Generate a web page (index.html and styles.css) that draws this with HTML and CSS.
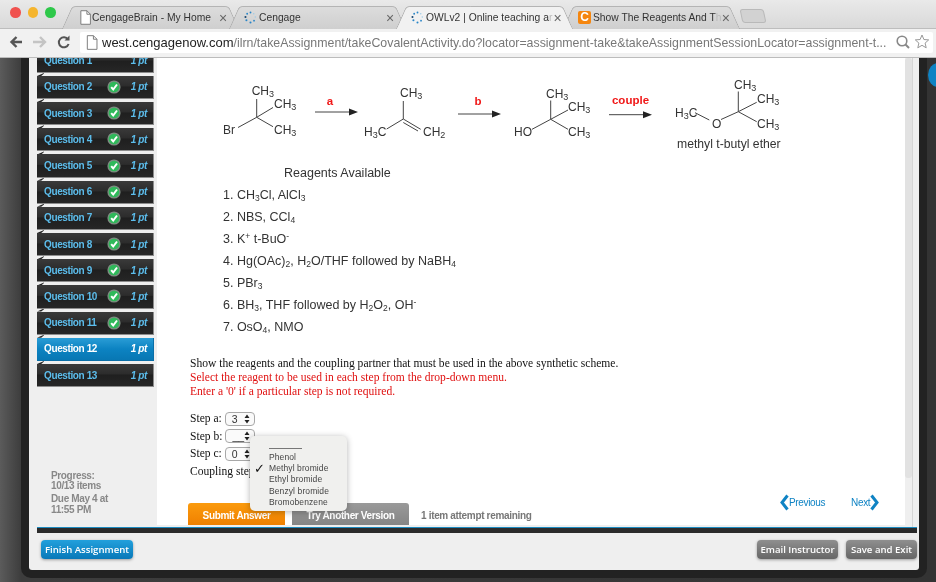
FILE: index.html
```html
<!DOCTYPE html>
<html lang="en">
<head>
<meta charset="utf-8">
<title>Show The Reagents And The Coupling Partner</title>
<link rel="stylesheet" href="styles.css">
</head>
<body>
<svg class="defs" width="0" height="0" aria-hidden="true">
  <symbol id="ck" viewBox="0 0 14 14">
    <circle cx="7" cy="7" r="6.6" fill="#7d8a80"/>
    <circle cx="7" cy="7" r="5.3" fill="#2fb95a"/>
    <path d="M4.2 7.2l2 2.3 3.8-5" fill="none" stroke="#fff" stroke-width="2"/>
  </symbol>
  <symbol id="spin" viewBox="0 0 14 14">
    <g fill="#2a86c8">
      <circle cx="7" cy="1.6" r="1"/><circle cx="10.5" cy="3" r=".8" fill="#9ccbe8"/><circle cx="12.2" cy="6.4" r=".8" fill="#9ccbe8"/>
      <circle cx="10.8" cy="10.4" r="1"/><circle cx="7" cy="12.4" r="1.1"/><circle cx="2.6" cy="10" r="1.1"/>
      <circle cx="1.6" cy="6.4" r="1.1" fill="#16456e"/><circle cx="3.4" cy="3" r="1"/>
    </g>
  </symbol>
  <symbol id="doc" viewBox="0 0 14 16">
    <path d="M2 .7h6.5L12.3 4.500V15.300H2z" fill="#fff" stroke="#777"/>
    <path d="M8.500 .7V4.500h3.800" fill="none" stroke="#777"/>
  </symbol>
  <symbol id="sel" viewBox="0 0 6 10">
    <path d="M3 .5L5.500 4H.5zM3 9.500L.5 6h5z" fill="#222"/>
  </symbol>
</svg>

<header class="chrome">
  <div class="tabstrip">
    <div class="lights"><i class="light red"></i><i class="light amber"></i><i class="light green"></i></div>
    <div class="tab t1"><svg class="fav"><use href="#doc"/></svg><span class="tab-label">CengageBrain - My Home</span><span class="tab-x">×</span></div>
    <div class="tab"><svg class="fav"><use href="#spin"/></svg><span class="tab-label">Cengage</span><span class="tab-x">×</span></div>
    <div class="tab active"><svg class="fav"><use href="#spin"/></svg><span class="tab-label">OWLv2 | Online teaching a<em>r</em></span><span class="tab-x">×</span></div>
    <div class="tab"><span class="c-icon">C</span><span class="tab-label">Show The Reagents And T<em>h</em></span><span class="tab-x">×</span></div>
    <div class="newtab"></div>
  </div>
  <div class="toolbar">
    <svg class="nav-icons" width="70" height="20" viewBox="0 0 70 20">
      <path d="M22 10H12M16.500 5l-5 5 5 5" fill="none" stroke="#555" stroke-width="2.400"/>
      <path d="M33 10h11M40 5l5 5-5 5" fill="none" stroke="#c4c4c4" stroke-width="2.400"/>
      <path d="M68 7.500a5 5 0 1 0 .6 4.500" fill="none" stroke="#555" stroke-width="2"/>
      <path d="M69.500 3.500v5h-5z" fill="#555"/>
    </svg>
    <div class="omnibox">
      <svg class="omni-doc"><use href="#doc"/></svg>
      <span class="url"><b>west.cengagenow.com</b>/ilrn/takeAssignment/takeCovalentActivity.do?locator=assignment-take&amp;takeAssignmentSessionLocator=assignment-t...</span>
      <svg class="omni-icons" width="38" height="18" viewBox="0 0 38 18">
        <circle cx="7" cy="8" r="4.800" fill="none" stroke="#888" stroke-width="1.600"/>
        <path d="M10.500 11.500l3.500 3.500" stroke="#888" stroke-width="2"/>
        <path d="M27 2l1.900 4.500 4.800.4-3.600 3.200 1.100 4.700-4.200-2.500-4.200 2.500 1.100-4.700-3.600-3.200 4.800-.4z" fill="#fff" stroke="#999"/>
      </svg>
    </div>
  </div>
</header>

<div class="stage">
  <div class="modal">
    <div class="panel">
      <div class="work">
        <aside class="sidebar">
          <ol class="questions">
            <li class="q"><span class="q-name">Question 1</span><span class="q-pt">1 pt</span></li>
            <li class="q"><span class="q-name">Question 2</span><svg class="ok"><use href="#ck"/></svg><span class="q-pt">1 pt</span></li>
            <li class="q"><span class="q-name">Question 3</span><svg class="ok"><use href="#ck"/></svg><span class="q-pt">1 pt</span></li>
            <li class="q"><span class="q-name">Question 4</span><svg class="ok"><use href="#ck"/></svg><span class="q-pt">1 pt</span></li>
            <li class="q"><span class="q-name">Question 5</span><svg class="ok"><use href="#ck"/></svg><span class="q-pt">1 pt</span></li>
            <li class="q"><span class="q-name">Question 6</span><svg class="ok"><use href="#ck"/></svg><span class="q-pt">1 pt</span></li>
            <li class="q"><span class="q-name">Question 7</span><svg class="ok"><use href="#ck"/></svg><span class="q-pt">1 pt</span></li>
            <li class="q"><span class="q-name">Question 8</span><svg class="ok"><use href="#ck"/></svg><span class="q-pt">1 pt</span></li>
            <li class="q"><span class="q-name">Question 9</span><svg class="ok"><use href="#ck"/></svg><span class="q-pt">1 pt</span></li>
            <li class="q"><span class="q-name">Question 10</span><svg class="ok"><use href="#ck"/></svg><span class="q-pt">1 pt</span></li>
            <li class="q"><span class="q-name">Question 11</span><svg class="ok"><use href="#ck"/></svg><span class="q-pt">1 pt</span></li>
            <li class="q current"><span class="q-name">Question 12</span><span class="q-pt">1 pt</span></li>
            <li class="q"><span class="q-name">Question 13</span><span class="q-pt">1 pt</span></li>
          </ol>
          <div class="progress">
            <p>Progress:<br>10/13 items</p>
            <p>Due May 4 at<br>11:55 PM</p>
          </div>
        </aside>

        <main class="content">
          <svg class="scheme" width="748" height="102" viewBox="157 58 748 102" role="img" aria-label="Synthetic scheme">
            <g class="bonds">
              <path d="M256.700 117.300V99M256.700 117.300L273 107.500M256.700 117.300L273 126.700M256.700 117.300L238 127.500"/>
              <path d="M403.300 101V119M403.300 119L386.700 129M403.300 119L420.700 129.300M403.300 122.500L418 131"/>
              <path d="M550.700 119.300V100.500M550.700 119.300L568 110M550.700 119.300L568 129.300M550.700 119.300L532 129.300"/>
              <path d="M738.300 111.700V91.500M738.300 111.700L756.700 102.300M738.300 111.700L756.700 121.700M738.300 111.700L721 119.500M709.300 120L695 112.700"/>
              <path d="M315 112H350M458 114H493M609 114.700H644"/>
            </g>
            <path class="head" d="M358 112l-9-3.500v7zM501 114l-9-3.500v7zM652 114.700l-9-3.500v7z"/>
            <g class="atoms">
              <text x="251.700" y="95">CH<tspan class="sb" dy="2">3</tspan></text>
              <text x="274" y="108">CH<tspan class="sb" dy="2">3</tspan></text>
              <text x="274" y="133.500">CH<tspan class="sb" dy="2">3</tspan></text>
              <text x="223" y="133.500">Br</text>
              <text x="400" y="97">CH<tspan class="sb" dy="2">3</tspan></text>
              <text x="364" y="136">H<tspan class="sb" dy="2">3</tspan><tspan dy="-2">C</tspan></text>
              <text x="423" y="136">CH<tspan class="sb" dy="2">2</tspan></text>
              <text x="546" y="98">CH<tspan class="sb" dy="2">3</tspan></text>
              <text x="568" y="110.500">CH<tspan class="sb" dy="2">3</tspan></text>
              <text x="568" y="136">CH<tspan class="sb" dy="2">3</tspan></text>
              <text x="514" y="136">HO</text>
              <text x="734" y="88.500">CH<tspan class="sb" dy="2">3</tspan></text>
              <text x="757" y="103">CH<tspan class="sb" dy="2">3</tspan></text>
              <text x="757" y="127.500">CH<tspan class="sb" dy="2">3</tspan></text>
              <text x="712" y="127.500">O</text>
              <text x="675" y="116.500">H<tspan class="sb" dy="2">3</tspan><tspan dy="-2">C</tspan></text>
              <text class="name" x="677" y="147.500">methyl t-butyl ether</text>
            </g>
            <g class="steps-red">
              <text x="330" y="105" text-anchor="middle">a</text>
              <text x="478" y="105" text-anchor="middle">b</text>
              <text x="630.500" y="104" text-anchor="middle">couple</text>
            </g>
          </svg>

          <section class="reagents">
            <h2 class="reagents-title">Reagents Available</h2>
            <ol class="reagent-list">
              <li>1. CH<sub>3</sub>Cl, AlCl<sub>3</sub></li>
              <li>2. NBS, CCl<sub>4</sub></li>
              <li>3. K<sup>+</sup> t-BuO<sup>-</sup></li>
              <li>4. Hg(OAc)<sub>2</sub>, H<sub>2</sub>O/THF followed by NaBH<sub>4</sub></li>
              <li>5. PBr<sub>3</sub></li>
              <li>6. BH<sub>3</sub>, THF followed by H<sub>2</sub>O<sub>2</sub>, OH<sup>-</sup></li>
              <li>7. OsO<sub>4</sub>, NMO</li>
            </ol>
          </section>

          <section class="prompt">
            <p>Show the reagents and the coupling partner that must be used in the above synthetic scheme.</p>
            <p class="warn">Select the reagent to be used in each step from the drop-down menu.</p>
            <p class="warn">Enter a '0' if a particular step is not required.</p>
          </section>

          <section class="steps">
            <div class="step">Step a: <span class="select"><span>3</span><svg class="updown"><use href="#sel"/></svg></span></div>
            <div class="step">Step b: <span class="select"><span>__</span><svg class="updown"><use href="#sel"/></svg></span></div>
            <div class="step">Step c: <span class="select"><span>0</span><svg class="updown"><use href="#sel"/></svg></span></div>
            <div class="step">Coupling step:</div>
            <div class="menu">
              <div class="menu-blank"></div>
              <div class="menu-item">Phenol</div>
              <div class="menu-item checked">Methyl bromide</div>
              <div class="menu-item">Ethyl bromide</div>
              <div class="menu-item">Benzyl bromide</div>
              <div class="menu-item">Bromobenzene</div>
            </div>
          </section>

          <div class="actions">
            <button class="btn submit">Submit Answer</button>
            <button class="btn another">Try Another Version</button>
            <span class="remaining">1 item attempt remaining</span>
            <nav class="pager">
              <a class="prev"><svg width="9" height="17" viewBox="0 0 9 17"><path d="M7.500 1.500L2 8.500l5.500 7" fill="none" stroke="#0f83c4" stroke-width="3"/></svg>Previous</a>
              <a class="next">Next<svg width="9" height="17" viewBox="0 0 9 17"><path d="M1.500 1.500L7 8.500l-5.500 7" fill="none" stroke="#0f83c4" stroke-width="3"/></svg></a>
            </nav>
          </div>
        </main>
        <div class="scroll"><div class="thumb"></div></div>
      </div>
      <div class="rule"></div>
      <footer class="foot">
        <button class="fbtn finish">Finish Assignment</button>
        <div class="foot-right">
          <button class="fbtn grey email">Email Instructor</button>
          <button class="fbtn grey save">Save and Exit</button>
        </div>
      </footer>
    </div>
  </div>
  <div class="close-dot"></div>
</div>
</body>
</html>
```
FILE: styles.css
```css
* { box-sizing: border-box; }
html, body { margin: 0; height: 100%; }
body {
  width: 936px;
  height: 582px;
  overflow: hidden;
  font-family: "Liberation Sans", Arial, sans-serif;
  background: #333;
  filter: blur(0.35px);
}
.defs { position: absolute; }
p, h2, ol { margin: 0; padding: 0; }
ol { list-style: none; }
button { border: 0; padding: 0; font: inherit; }

/* Browser chrome */
.chrome { height: 58px; display: flex; flex-direction: column; background: #f1f1f1; }
.tabstrip {
  height: 29px;
  display: flex;
  align-items: flex-end;
  background: linear-gradient(#e9e9e9, #d9d9d9);
  padding-left: 67px;
  border-bottom: 1px solid #bdbdbd;
  position: relative;
}
.lights { position: absolute; left: 10px; top: 7px; display: flex; gap: 7px; }
.light { width: 10.500px; height: 10.500px; border-radius: 50%; }
.red { background: #f0524f; }
.amber { background: #f5b52e; }
.green { background: #2ec84a; }

.tab {
  position: relative;
  z-index: 1;
  width: 167px;
  height: 23px;
  margin-bottom: -1px;
  padding-left: 10px;
  display: flex;
  align-items: center;
  font-size: 10.300px;
  color: #333;
  isolation: isolate;
  flex: none;
}
.tab::before, .tab::after {
  content: "";
  position: absolute;
  top: 0; bottom: 0;
  width: 55%;
  background: linear-gradient(#dcdcdc, #cfcfcf);
  border-top: 1px solid #b4b4b4;
  z-index: -1;
}
.tab::before { left: 0; transform: skewX(-24deg); border-left: 1px solid #aaa; border-radius: 4px 0 0 0; }
.tab::after { right: 0; transform: skewX(24deg); border-right: 1px solid #aaa; border-radius: 0 4px 0 0; }
.tab.active { z-index: 2; }
.tab.active::before, .tab.active::after { background: #f1f1f1; }
.t1 { padding-left: 12px; }
.tab-label { flex: 1; white-space: nowrap; margin-left: 2px; }
.t1 .tab-label { margin-left: 0; }
.tab-label em { font-style: normal; color: #bbb; }
.tab-x { width: 12px; margin-right: 5px; font-size: 14px; line-height: 1; color: #666; text-align: center; }
.fav { width: 13px; height: 15px; flex: none; }
.c-icon {
  width: 13px; height: 13px; flex: none;
  background: #f5860f; color: #fff; border-radius: 2px;
  font: bold 12px/13px "Liberation Sans", sans-serif; text-align: center;
}
.newtab {
  width: 24px; height: 14px; margin: 0 0 5px 6px;
  background: #d2d2d2; border: 1px solid #b9b9b9; border-radius: 3px;
  transform: skewX(12deg);
}
.toolbar {
  flex: 1;
  display: flex;
  align-items: center;
  padding: 0 3px 2px 0;
  background: #f1f1f1;
  border-bottom: 1px solid #bcbcbc;
}
.nav-icons { flex: none; margin-right: 10px; }
.omnibox {
  flex: 1;
  height: 21px;
  display: flex;
  align-items: center;
  background: #fff;
  border-radius: 2px;
  padding-left: 5px;
  color: #777;
  white-space: nowrap;
  overflow: hidden;
}
.omni-doc { width: 14px; height: 15px; flex: none; margin-right: 3px; }
.url { flex: 1; font-size: 12.350px; }
.url b { font-size: 13px; font-weight: normal; color: #222; }
.omni-icons { flex: none; }

/* Stage */
.stage {
  height: 524px;
  position: relative;
  background: linear-gradient(90deg, #5b5b5b, #3d3d3d 21px, #333 100%);
  overflow: hidden;
}
.modal {
  margin-left: 21px;
  width: 906px;
  height: 520px;
  padding: 0 8px 8px;
  background: #222;
  border-radius: 0 0 10px 10px;
}
.panel {
  height: 100%;
  background: #efefef;
  border-radius: 0 0 3px 3px;
  padding: 0 2px 0 8px;
  display: flex;
  flex-direction: column;
}
.work { height: 469px; display: flex; overflow: hidden; }

/* Sidebar */
.sidebar { width: 117px; flex: none; display: flex; flex-direction: column; justify-content: space-between; }
.questions { margin-top: -8.300px; }
.q {
  position: relative;
  height: 23.200px;
  margin-bottom: 3px;
  display: flex;
  align-items: center;
  padding: 0 6px 0 7px;
  background: linear-gradient(#3a3a3a, #2c2c2c 45%, #1f1f1f 50%, #262626);
  border: 1px solid #8c8c8c;
  border-width: 0 1px 1px 0;
  font-size: 10px;
  letter-spacing: -0.38px;
  font-weight: bold;
  color: #5cbdec;
}
.q::before {
  content: "";
  position: absolute;
  left: 0; top: -3px;
  width: 7px; height: 3px;
  background: #222;
  clip-path: polygon(0 100%, 100% 0, 100% 20%, 60% 100%);
}
.q.current { background: linear-gradient(#2a9dd6, #0c83c2 50%, #0877b3); border-color: #0a6fa8; color: #fff; }
.q-name { flex: 1; }
.q-pt { font-style: italic; width: 18px; text-align: right; }
.ok { width: 14px; height: 14px; margin-right: 8px; }
.progress {
  padding: 0 0 12px 14px;
  font-size: 10px;
  letter-spacing: -0.35px;
  font-weight: bold;
  line-height: 10.300px;
  color: #888;
}
.progress p + p { margin-top: 3px; }

/* Content */
.content { width: 748px; margin-left: 3px; height: 467px; background: #fff; flex: none; display: flex; flex-direction: column; }
.scheme { display: block; flex: none; }
.bonds path { fill: none; stroke: #444; stroke-width: 1; }
.head { fill: #222; }
.atoms text { font-size: 12px; fill: #333; }
.atoms .name { font-size: 12.200px; }
.atoms .sb { font-size: 9px; }
.atoms text tspan.sb + tspan { font-size: 12px; }
.steps-red text { font-size: 11.500px; font-weight: bold; fill: #f01818; }

.reagents { height: 185px; font-size: 12.500px; color: #333; }
.reagents-title { font-size: 12.500px; font-weight: normal; padding: 6px 0 0 127px; line-height: 15px; }
.reagent-list { padding: 3px 0 0 66px; }
.reagent-list li { height: 22px; line-height: 22px; white-space: nowrap; }
sub, sup { font-size: 8.500px; line-height: 0; }
sub { vertical-align: -2px; }
sup { vertical-align: 4px; }

.prompt { padding: 12px 0 0 33px; font: 11.570px/14px "Liberation Serif", "Times New Roman", serif; color: #111; }
.warn { color: #e01010; }

.steps { position: relative; margin-top: 11px; padding-left: 33px; font: 11.570px/17.500px "Liberation Serif", "Times New Roman", serif; color: #111; }
.step { white-space: nowrap; height: 17.500px; display: flex; align-items: center; gap: 3px; }
.select {
  width: 30px; height: 14px;
  display: flex; align-items: center; justify-content: space-between;
  padding: 0 4px 0 6px;
  border: 1px solid #a8a8a8; border-radius: 4px;
  font: 10.500px/1 "Liberation Sans", sans-serif;
  color: #333; background: #fafafa;
}
.updown { width: 6px; height: 10px; }
.menu {
  position: absolute;
  z-index: 5;
  left: 93px; top: 26px;
  width: 97px; height: 75px;
  padding: 3px 0 0 19px;
  background: #f0f0ee;
  border-radius: 5px;
  box-shadow: 0 1px 6px rgba(0,0,0,.3);
  font: 8.500px/11.200px "Liberation Sans", sans-serif;
  letter-spacing: 0.1px;
  color: #444;
  white-space: nowrap;
}
.menu-blank { height: 10px; width: 33px; border-bottom: 1px solid #777; margin-bottom: 3px; }
.menu-item { position: relative; height: 11.200px; }
.checked::before { content: "✓"; position: absolute; left: -15px; top: 0; font-size: 13px; font-weight: bold; color: #111; font-family: "DejaVu Sans", sans-serif; }

.actions { margin-top: auto; padding-left: 31px; display: flex; align-items: flex-end; position: relative; }
.btn { height: 22px; padding-top: 3px; color: #fff; font-weight: bold; font-size: 10px; letter-spacing: -0.35px; border-radius: 3px 3px 0 0; flex: none; font-family: inherit; }
.submit { width: 97px; background: linear-gradient(#fb9b0e, #f08000); }
.another { width: 117px; margin-left: 7px; background: linear-gradient(#9a9a9a, #858585); }
.remaining { margin: 0 0 4px 12px; font-size: 10px; letter-spacing: -0.33px; font-weight: bold; color: #777; }
.pager { position: absolute; left: 623px; top: -9px; display: flex; gap: 26px; font-size: 10px; letter-spacing: -0.35px; color: #0f83c4; }
.pager a { display: flex; align-items: center; height: 17px; }

.scroll { flex: 1; position: relative; border-right: 1px solid #d5d5d5; margin-right: 5px; }
.thumb { width: 7px; height: 420px; background: #e2e2e2; border-radius: 3px; }

.rule { height: 6px; background: #2b2b2b; border-top: 1px solid #1d8bc0; }
.foot { flex: 1; display: flex; justify-content: space-between; padding: 7px 0 0 4px; }
.foot-right { display: flex; gap: 8px; }
.fbtn {
  height: 19px;
  color: #fff;
  font: 600 9.600px/19px "Open Sans", sans-serif;
  white-space: nowrap;
  border-radius: 4px;
  box-shadow: 0 1px 3px rgba(0,0,0,.35);
}
.finish { width: 92px; background: linear-gradient(#22a0dc, #0878b8); }
.grey { background: linear-gradient(#8f8f8f, #666); }
.email { width: 81px; }
.save { width: 71px; }
.close-dot { position: absolute; left: 928px; top: 5px; width: 20px; height: 24px; border-radius: 50%; background: #0f83c4; }
```
